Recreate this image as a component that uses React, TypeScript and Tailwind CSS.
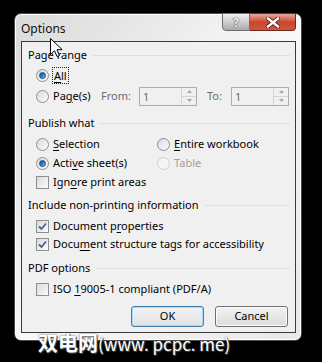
import * as React from "react";

const FONT = { fontFamily: '"Segoe UI", "Noto Sans", "Open Sans", sans-serif' };

function U({ children }: { children: React.ReactNode }) {
  return <span className="underline underline-offset-2 decoration-1">{children}</span>;
}

function Radio({ checked, disabled }: { checked?: boolean; disabled?: boolean }) {
  return (
    <span
      className={
        "size-[13px] shrink-0 rounded-full border flex items-center justify-center " +
        (disabled
          ? "border-[#cfcfcf] bg-[#f4f4f4]"
          : "border-[#8e8f8f] bg-gradient-to-br from-[#dcdcdc] to-[#fbfbfb]")
      }
    >
      {checked && (
        <span className="size-[7px] rounded-full bg-gradient-to-br from-[#0d4f8c] via-[#2a7ac4] to-[#6bc0f0] border border-[#1d4f7e]" />
      )}
    </span>
  );
}

function Check({ checked }: { checked?: boolean }) {
  return (
    <span className="size-[13px] shrink-0 border border-[#8e8f8f] bg-gradient-to-br from-[#dadada] to-[#fcfcfc] flex items-center justify-center">
      {checked && (
        <svg width="9" height="9" viewBox="0 0 9 9">
          <path d="M1 4.5 L3.5 7 L8 1.5" fill="none" stroke="#4a5f97" strokeWidth="1.8" />
        </svg>
      )}
    </span>
  );
}

function Header({ label }: { label: string }) {
  return (
    <div className="h-[16px] flex items-center gap-[6px] pr-[5px]">
      <span>{label}</span>
      <span className="flex-1 h-px bg-[#d9e1e7]" />
    </div>
  );
}

function Spin() {
  return (
    <div className="w-[58px] h-[19px] border border-[#adadad] bg-[#f0f0f0] flex">
      <span className="flex-1 pl-[3px] text-[#6d6d6d] leading-[17px]">1</span>
      <div className="w-[15px] flex flex-col border-l border-[#d5d5d5]">
        <span className="flex-1 flex items-center justify-center border-b border-[#d5d5d5]">
          <svg width="5" height="3" viewBox="0 0 5 3"><path d="M0 3 L2.5 0 L5 3Z" fill="#a8a8a8" /></svg>
        </span>
        <span className="flex-1 flex items-center justify-center">
          <svg width="5" height="3" viewBox="0 0 5 3"><path d="M0 0 L2.5 3 L5 0Z" fill="#a8a8a8" /></svg>
        </span>
      </div>
    </div>
  );
}

export default function App() {
  return (
    <div className="w-[322px] h-[362px] bg-black relative overflow-hidden text-[11px] text-black" style={FONT}>
      <div className="pl-[14px] pt-[13px]">
        {/* window frame */}
        <div className="w-[288px] h-[328px] rounded-[7px] border border-[#4a4a4a] bg-gradient-to-br from-[#dadada] via-[#f8f8f8] to-[#e8e8e8] shadow-[inset_0_0_0_1px_#ffffff]">
          <div className="h-[27px] flex justify-between">
            <span className="pl-[6px] pt-[6px] text-[12px] text-[#111]">Options</span>
            <div className="flex mr-[5px] -mt-px">
              <div className="w-[28px] h-[18px] border border-[#6f6f6f] rounded-bl-[4px] bg-gradient-to-b from-[#f0f0f0] via-[#cfcfcf] to-[#a9a9a9] flex items-center justify-center">
                <span className="font-bold text-[13px] leading-none text-[#f4f4f4] [text-shadow:0_0_1px_#333,0_0_1px_#333]">?</span>
              </div>
              <div className="w-[46px] h-[18px] border border-l-0 border-[#6b2a20] rounded-br-[4px] bg-gradient-to-b from-[#e9a99c] via-[#c9462f] to-[#d1573c] flex items-center justify-center">
                <svg width="14" height="11" viewBox="0 0 14 11">
                  <path d="M2 1.5 L12 9.5 M12 1.5 L2 9.5" stroke="#3b1a14" strokeWidth="4" strokeLinecap="square" />
                  <path d="M2 1.5 L12 9.5 M12 1.5 L2 9.5" stroke="#ffffff" strokeWidth="2.4" strokeLinecap="square" />
                </svg>
              </div>
            </div>
          </div>

          {/* client area */}
          <div className="ml-[6px] w-[275px] h-[292px] border border-[#3a3a3a] bg-[#f0f0f0] pl-[6px] pt-[5px]">
            <Header label="Page range" />
            <div className="h-[24px] flex items-center pl-[8px] gap-[4px]">
              <Radio checked />
              <span className="outline-1 outline-dotted outline-[#222] px-px leading-[15px]"><U>A</U>ll</span>
            </div>
            <div className="h-[18px] flex items-center pl-[8px]">
              <Radio />
              <span className="ml-[4px] w-[48px]">Pa<U>g</U>e(s)</span>
              <span className="w-[38px] text-[#6d6d6d]">From:</span>
              <Spin />
              <span className="ml-[10px] w-[24px] text-[#6d6d6d]">To:</span>
              <Spin />
            </div>

            <div className="mt-[10px]">
              <Header label="Publish what" />
            </div>
            <div className="mt-[4px] pl-[8px] grid grid-cols-[121px_1fr]">
              <div className="h-[19px] flex items-center gap-[4px]"><Radio /><span><U>S</U>election</span></div>
              <div className="h-[19px] flex items-center gap-[4px]"><Radio /><span><U>E</U>ntire workbook</span></div>
              <div className="h-[19px] flex items-center gap-[4px]"><Radio checked /><span>Acti<U>v</U>e sheet(s)</span></div>
              <div className="h-[19px] flex items-center gap-[4px]"><Radio disabled /><span className="text-[#a0a0a0]">Table</span></div>
              <div className="h-[19px] flex items-center gap-[4px] col-span-2"><Check /><span>Ign<U>o</U>re print areas</span></div>
            </div>

            <div className="mt-[5px]">
              <Header label="Include non-printing information" />
            </div>
            <div className="mt-[4px] pl-[8px]">
              <div className="h-[18px] flex items-center gap-[4px]"><Check checked /><span>Document p<U>r</U>operties</span></div>
              <div className="h-[18px] flex items-center gap-[4px]"><Check checked /><span>Docu<U>m</U>ent structure tags for accessibility</span></div>
            </div>

            <div className="mt-[7px]">
              <Header label="PDF options" />
            </div>
            <div className="mt-[4px] pl-[8px]">
              <div className="h-[18px] flex items-center gap-[4px]"><Check /><span>ISO <U>1</U>9005-1 compliant (PDF/A)</span></div>
            </div>

            <div className="mt-[8px] flex justify-end gap-[11px] pr-[7px]">
              <button className="w-[73px] h-[21px] rounded-[3px] border border-[#3c7fb1] bg-gradient-to-b from-[#f2f2f2] to-[#e2e2e2] shadow-[inset_0_0_0_1px_#a9dcf6]">OK</button>
              <button className="w-[73px] h-[21px] rounded-[3px] border border-[#707070] bg-gradient-to-b from-[#f2f2f2] to-[#dcdcdc] shadow-[inset_0_0_0_1px_#fcfcfc]">Cancel</button>
            </div>
          </div>
        </div>
      </div>

      {/* mouse pointer */}
      <svg className="absolute left-[50px] top-[38px]" width="13" height="20" viewBox="0 0 13 20">
        <path d="M0.5 0.5 L0.5 16.5 L4.5 12.7 L7 18.5 L9.5 17.4 L7 11.7 L12.2 11.7 Z" fill="#fff" stroke="#000" strokeWidth="1" strokeLinejoin="round" />
      </svg>

      {/* watermark */}
      <div
        className="absolute left-[38px] top-[333px] flex items-baseline leading-none text-white whitespace-nowrap [text-shadow:0_0_2px_#555,1px_1px_1px_#444]"
        style={{ fontFamily: '"Noto Sans CJK SC", "Noto Sans", sans-serif' }}
      >
        <span className="text-[20px] font-bold">双电网</span>
        <span className="text-[17px]">(www. pcpc. me)</span>
      </div>
    </div>
  );
}
